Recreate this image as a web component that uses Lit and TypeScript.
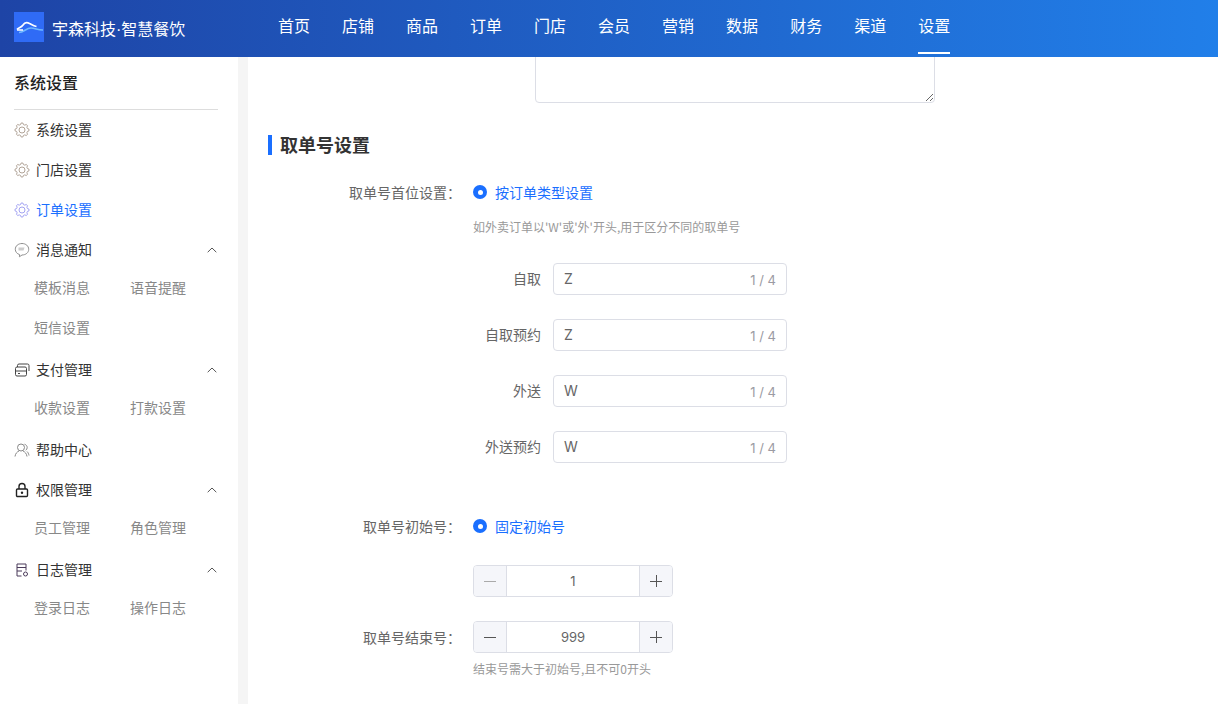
import { LitElement, html, css, svg } from "lit";
import { customElement } from "lit/decorators.js";

const gearPoints = Array.from({ length: 48 }, (_, i) => {
  const a = (i / 48) * Math.PI * 2;
  const phase = i % 6;
  const r = phase === 0 || phase === 1 || phase === 5 ? 7 : 5.6;
  return `${(8 + r * Math.cos(a)).toFixed(2)},${(8 + r * Math.sin(a)).toFixed(2)}`;
}).join(" ");
const gear = svg`<polygon points="${gearPoints}" stroke-width=".9" stroke-linejoin="round"/><circle cx="8" cy="8" r="3" stroke-width=".9"/>`;
const icons: Record<string, unknown> = {
  gear,
  chat: svg`<path d="M8 1.500c3.800 0 6.700 2.500 6.700 5.800S11.800 13 8 13l-2.600 1.800.2-2.200C3 11.800 1.300 9.800 1.300 7.300 1.300 4 4.200 1.500 8 1.500z"/><path d="M4.500 5.500h6l-1 3h-5z" fill="#ccc" stroke="none"/>`,
  card: svg`<rect x="1.500" y="5" width="11" height="9" rx="1.500"/><path d="M1.500 9h11M3.500 5V3.500A1.500 1.500 0 0 1 5 2h8.500A1.500 1.500 0 0 1 15 3.500V9M4 11.500h2"/>`,
  user: svg`<circle cx="7" cy="5.500" r="3.500"/><path d="M1 14.500c.4-3 2.200-4.800 4-5.500M9 9c1.800.7 3.600 2.500 4 5.500M10.500 2.200c1.800.5 2.700 2 2.700 3.300 0 1.200-.6 2.200-1.500 2.800M13 9.500c1 .8 1.700 2.300 2 4"/>`,
  lock: svg`<rect x="2.500" y="7" width="11" height="7.500" rx="1" stroke-width="1.400"/><path d="M5 7V4.500a3 3 0 0 1 6 0V7" stroke-width="1.400"/><circle cx="8" cy="10.700" r="1.200" fill="currentColor" stroke="none"/>`,
  log: svg`<path d="M7.500 14H3V2h9v6.500M3 5.500h9M3 9h5"/><circle cx="11.500" cy="12" r="2"/>`,
};
const ic = (name: string) =>
  html`<svg class="ic" viewBox="0 0 16 16" width="16" height="16" fill="none" stroke="currentColor" stroke-width="1">${icons[name]}</svg>`;
const chevron = html`<svg class="chev" viewBox="0 0 10 6" width="10" height="6" fill="none" stroke="#555" stroke-width="1"><path d="M.7 5.200 5 1l4.300 4.200"/></svg>`;

type Group = { icon: string; label: string; iconColor: string; active?: boolean; subs?: string[] };
const groups: Group[] = [
  { icon: "gear", label: "系统设置", iconColor: "#a89a8c" },
  { icon: "gear", label: "门店设置", iconColor: "#a89a8c" },
  { icon: "gear", label: "订单设置", iconColor: "#9a9af0", active: true },
  { icon: "chat", label: "消息通知", iconColor: "#8f8f8f", subs: ["模板消息", "语音提醒", "短信设置"] },
  { icon: "card", label: "支付管理", iconColor: "#444", subs: ["收款设置", "打款设置"] },
  { icon: "user", label: "帮助中心", iconColor: "#888" },
  { icon: "lock", label: "权限管理", iconColor: "#222", subs: ["员工管理", "角色管理"] },
  { icon: "log", label: "日志管理", iconColor: "#4a3a5a", subs: ["登录日志", "操作日志"] },
];
const nav = ["首页", "店铺", "商品", "订单", "门店", "会员", "营销", "数据", "财务", "渠道", "设置"];
const prefixes: [string, string][] = [["自取", "Z"], ["自取预约", "Z"], ["外送", "W"], ["外送预约", "W"]];

@customElement("app-root")
export class AppRoot extends LitElement {
  static styles = css`
    :host { display: block; width: 1218px; height: 704px; overflow: hidden; background: #fff;
      font-family: "Noto Sans CJK SC", "Noto Sans", sans-serif; color: #333; font-size: 14px; }
    .top { height: 57px; display: flex; align-items: stretch;
      background: linear-gradient(90deg, #1e44a6 0%, #217fe9 100%); color: #fff; }
    .brand { width: 278px; display: flex; align-items: center; padding-left: 14px; box-sizing: border-box; gap: 8px; font-size: 16px;
      font-family: "Liberation Sans", "Noto Sans CJK SC", sans-serif; }
    .brand-name { padding-bottom: 2px; }
    .logo { width: 30px; height: 30px; display: block; flex: none; margin-bottom: 4px; }
    .nav { display: flex; gap: 32px; }
    .nav a { display: flex; align-items: center; height: 50px; font-size: 16px; box-sizing: content-box; padding-bottom: 2px; }
    .nav a.on { border-bottom: 2px solid #fff; }
    .body { display: flex; height: 647px; }
    .side { width: 238px; flex: none; box-sizing: border-box; padding: 0 20px 0 14px; background: #fff; }
    .side h2 { margin: 0 0 1px; height: 52px; line-height: 51px; font-size: 16px; font-weight: 500; color: #222;
      border-bottom: 1px solid #ddd; box-sizing: content-box; }
    .item { height: 40px; margin-top: -1px; margin-bottom: 1px; display: flex; align-items: center; font-size: 14px; line-height: 20px; color: #333; }
    .item.on { color: #1a6fff; }
    .item .ic { display: block; flex: none; }
    .iconbox { display: flex; margin-right: 6px; }
    .item .lbl { flex: 1; padding-bottom: 2px; }
    .chev { margin-right: 1px; }
    .subs { display: grid; grid-template-columns: 96px 96px; grid-auto-rows: 40px; padding-left: 20px; margin-top: -2px; margin-bottom: 2px; }
    .subs span { display: flex; align-items: center; font-size: 14px; color: #888; padding-bottom: 4px; box-sizing: border-box; }
    .gap { width: 10px; flex: none; background: #f5f5f5; }
    .main { flex: 1; overflow: hidden; padding-left: 20px; }
    .ta { display: block; margin: -20px 0 0 267px; width: 400px; height: 66px; box-sizing: border-box;
      border: 1px solid #dcdee6; border-radius: 4px; background: #fff; outline: none; }
    .sec { margin-top: 31px; height: 22px; display: flex; align-items: center; gap: 8px; font-size: 18px; line-height: 20px; font-weight: 700; color: #333; }
    .sec i { width: 4px; height: 20px; background: #1a6fff; }
    .sec span { padding-bottom: 2px; }
    .row { display: flex; align-items: center; }
    .lab { width: 193px; text-align: right; color: #666; font-size: 14px; flex: none; line-height: 20px; }
    .radio { margin-left: 12px; display: flex; align-items: center; gap: 8px; color: #1a6fff; font-size: 14px; line-height: 20px; }
    .dot { width: 14px; height: 14px; border-radius: 50%; background: #1a6fff; display: flex; align-items: center; justify-content: center; }
    .dot::after { content: ""; width: 5px; height: 5px; border-radius: 50%; background: #fff; }
    .hint { margin-left: 205px; font-size: 12px; color: #999; line-height: 18px; }
    .r1 { margin-top: 25px; height: 22px; }
    .h1 { margin-top: 15px; }
    .pre { display: flex; align-items: center; height: 32px; margin-bottom: 24px; }
    .pre .pl { width: 273px; text-align: right; color: #666; font-size: 14px; line-height: 20px; flex: none; padding-bottom: 2px; }
    .inp { margin-left: 12px; width: 234px; height: 32px; box-sizing: border-box; border: 1px solid #dcdee6; border-radius: 4px;
      display: flex; align-items: center; justify-content: space-between; padding: 0 10px; font-family: Inter, "Noto Sans", sans-serif; font-size: 14px; color: #666; }
    .inp span { padding-bottom: 2px; }
    .inp small { font-size: 13px; color: #9b9ba3; padding-top: 2px; }
    .pres { margin-top: 27px; }
    .r2 { margin-top: 52px; height: 22px; }
    .step { display: flex; width: 200px; height: 32px; box-sizing: border-box; border: 1px solid #dcdee6; border-radius: 4px; margin-left: 12px; overflow: hidden; font-family: Inter, "Noto Sans", sans-serif; }
    .step b { width: 33px; box-sizing: border-box; flex: none; background: #f5f6fa; display: flex; align-items: center; justify-content: center; }
    .step .m { border-right: 1px solid #dcdee6; }
    .step .p { border-left: 1px solid #dcdee6; }
    .step span { flex: 1; display: flex; align-items: center; justify-content: center; font-size: 13px; color: #666; }
    .s1 { margin-top: 28px; }
    .s2 { margin-top: 24px; }
    .h2 { margin-top: 7px; }
    .l0 { width: 193px; flex: none; }
  `;

  private stepper(val: string, dim: boolean) {
    return html`<div class="step">
      <b class="m"><svg viewBox="0 0 12 12" width="12" height="12" stroke="${dim ? "#aaa" : "#555"}" fill="none"><path d="M0 6.500h12"/></svg></b>
      <span>${val}</span>
      <b class="p"><svg viewBox="0 0 12 12" width="12" height="12" stroke="#555" fill="none"><path d="M0 6.500h12M6.500 0v12"/></svg></b>
    </div>`;
  }

  render() {
    return html`
      <header class="top">
        <div class="brand">
          <svg class="logo" viewBox="0 0 30 30">
            <rect width="30" height="30" fill="#2f6bf6"/>
            <path d="M5 20.500C10 20.500 12 16 17 16c4 0 7 2.200 12 2" fill="none" stroke="#6fb8ff" stroke-width="1.500"/>
            <path d="M3 17.500c1.500-2 4-1.500 6-4.500 1.500-2.500 4-3 6.500-1.500 2 1 4 2.500 7 3" fill="none" stroke="#fff" stroke-width="1.700"/>
            <path d="M3 18h6" fill="none" stroke="#fff" stroke-width="1.500"/>
          </svg>
          <span class="brand-name">宇森科技·智慧餐饮</span>
        </div>
        <nav class="nav">${nav.map((n, i) => html`<a class="${i === nav.length - 1 ? "on" : ""}">${n}</a>`)}</nav>
      </header>
      <div class="body">
        <aside class="side">
          <h2>系统设置</h2>
          ${groups.map(
            (g) => html`
              <div class="item ${g.active ? "on" : ""}">
                <span class="iconbox" style="color:${g.iconColor}">${ic(g.icon)}</span>
                <span class="lbl">${g.label}</span>
                ${g.subs ? chevron : ""}
              </div>
              ${g.subs ? html`<div class="subs">${g.subs.map((s) => html`<span>${s}</span>`)}</div>` : ""}
            `
          )}
        </aside>
        <div class="gap"></div>
        <main class="main">
          <textarea class="ta"></textarea>
          <div class="sec"><i></i><span>取单号设置</span></div>
          <div class="row r1"><div class="lab">取单号首位设置：</div><label class="radio"><span class="dot"></span>按订单类型设置</label></div>
          <div class="hint h1">如外卖订单以'W'或'外'开头,用于区分不同的取单号</div>
          <div class="pres">
            ${prefixes.map(
              ([l, v]) => html`<div class="pre"><div class="pl">${l}</div><div class="inp"><span>${v}</span><small>1 / 4</small></div></div>`
            )}
          </div>
          <div class="row r2"><div class="lab">取单号初始号：</div><label class="radio"><span class="dot"></span>固定初始号</label></div>
          <div class="row s1"><div class="l0"></div>${this.stepper("1", true)}</div>
          <div class="row s2"><div class="lab">取单号结束号：</div>${this.stepper("999", false)}</div>
          <div class="hint h2">结束号需大于初始号,且不可0开头</div>
        </main>
      </div>
    `;
  }
}
